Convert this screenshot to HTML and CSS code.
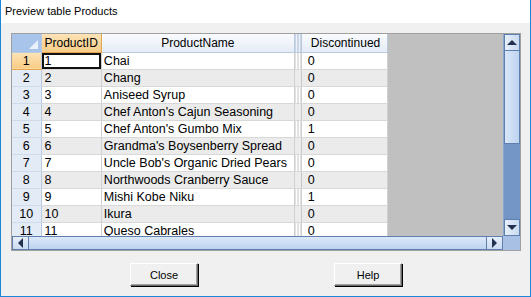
FILE: index.html
```html
<!DOCTYPE html>
<html lang="en">

<head>
    <meta charset="UTF-8">
    <title>Preview table Products</title>
    <link rel="stylesheet" href="styles.css">
</head>

<body>
    <div class="window">
        <div class="titlebar">Preview table Products</div>

        <div class="content">
            <div class="grid">
                <div class="grid-top">
                    <div class="cells">
                        <table>
                            <thead>
                                <tr>
                                    <th class="corner"><span class="tri"></span></th>
                                    <th class="col-id active">ProductID</th>
                                    <th class="col-name">ProductName</th>
                                    <th class="col-sep"></th>
                                    <th class="col-disc">Discontinued</th>
                                </tr>
                            </thead>
                            <tbody id="rows">
                                <!-- rows go here -->
                            </tbody>
                        </table>
                    </div>
                    <div class="vscroll">
                        <div class="arrow up"><span></span></div>
                        <div class="thumb"></div>
                        <div class="track"></div>
                        <div class="arrow down"><span></span></div>
                    </div>
                </div>
                <div class="hscroll">
                    <div class="arrow left"><span></span></div>
                    <div class="hthumb"></div>
                    <div class="arrow right"><span></span></div>
                    <div class="sizebox"></div>
                </div>
            </div>

            <div class="buttons">
                <button>Close</button>
                <button>Help</button>
            </div>
        </div>
    </div>

    <script>
        let products = [
            [1, "Chai", 0],
            [2, "Chang", 0],
            [3, "Aniseed Syrup", 0],
            [4, "Chef Anton's Cajun Seasoning", 0],
            [5, "Chef Anton's Gumbo Mix", 1],
            [6, "Grandma's Boysenberry Spread", 0],
            [7, "Uncle Bob's Organic Dried Pears", 0],
            [8, "Northwoods Cranberry Sauce", 0],
            [9, "Mishi Kobe Niku", 1],
            [10, "Ikura", 0],
            [11, "Queso Cabrales", 0]
        ]

        let tbody = document.getElementById('rows')
        products.forEach((p, i) => {
            let tr = document.createElement('tr')
            if (i % 2 === 1) tr.className = 'alt'
            tr.innerHTML = `
                <td class="num${i === 0 ? ' active' : ''}">${p[0]}</td>
                <td class="col-id${i === 0 ? ' focus' : ''}">${p[0]}</td>
                <td class="col-name">${p[1]}</td>
                <td class="col-sep"></td>
                <td class="col-disc">${p[2]}</td>
            `
            tbody.appendChild(tr)
        })
    </script>
</body>

</html>
```

FILE: styles.css
```css
* {
    margin: 0;
    padding: 0;
    box-sizing: border-box;
}

body {
    background-color: #fff;
    font-family: "Liberation Sans", Arial, sans-serif;
}

.window {
    width: 531px;
    height: 297px;
    border: 1px solid #1c86d9;
    border-top: none;
    background-color: #f0f0f0;
    display: flex;
    flex-direction: column;
}

.titlebar {
    height: 23px;
    background-color: #fff;
    font-family: "Liberation Sans", Arial, sans-serif;
    font-size: 11px;
    line-height: 23px;
    padding-left: 4px;
    color: #000;
}

.content {
    flex: 1;
    padding: 10px 9px 0 10px;
}

.grid {
    width: 510px;
    height: 218px;
    border: 1px solid #a0a0a0;
    background-color: #c0c0c0;
    display: flex;
    flex-direction: column;
    overflow: hidden;
}

.grid-top {
    display: flex;
    height: 202px;
}

.cells {
    flex: 1;
    overflow: hidden;
}

table {
    border-collapse: collapse;
    table-layout: fixed;
    font-size: 12.5px;
    color: #000;
}

th,
td {
    height: 17px;
    padding: 0 3px;
    white-space: nowrap;
    overflow: hidden;
    font-weight: normal;
    text-align: left;
}

th {
    height: 18px;
    font-size: 12px;
    background: linear-gradient(#f9fbfe, #e5ecf6);
    border-right: 1px solid #b9c9de;
    border-bottom: 1px solid #b9c9de;
    text-align: center;
}

td {
    background-color: #fff;
    border-right: 1px solid #d0d0d0;
    border-bottom: 1px solid #d8d8d8;
}

tr.alt td {
    background-color: #ebebeb;
}

.corner {
    width: 29px;
    background: #a9c4ea;
    position: relative;
}

.tri {
    position: absolute;
    right: 3px;
    bottom: 3px;
    width: 0;
    height: 0;
    border-left: 9px solid transparent;
    border-bottom: 9px solid #eaf1fb;
}

.col-id {
    width: 59px;
}

.col-name {
    width: 193px;
}

td.col-name {
    padding-left: 2px;
}

.col-sep {
    width: 7px;
    padding: 0;
    background: repeating-linear-gradient(90deg, #c4c4c4 0 1px, #fff 1px 3px) !important;
}

tr.alt td.col-sep {
    background: #ebebeb !important;
    border-right-color: #c8c8c8;
}

th.col-sep {
    background: repeating-linear-gradient(90deg, #a6b9d4 0 1px, #eef3fa 1px 3px) !important;
}

.col-disc {
    width: 86px;
}

th.col-disc {
    text-align: left;
    padding-left: 9px;
}

td.col-disc {
    padding-left: 6px;
}

th.active {
    background: linear-gradient(#fde3b6, #f8cc86);
    border-right-color: #e5a64e;
    border-bottom-color: #e5a64e;
}

td.num {
    background: #e3ebf6 !important;
    border-right: 1px solid #b9c9de;
    border-bottom: 1px solid #cfdbea;
    text-align: center;
}

td.num.active {
    background: linear-gradient(#fde3b6, #f8cc86) !important;
    border-bottom-color: #e5a64e;
}

td.focus {
    box-shadow: inset 0 0 0 2px #111;
}

/* scrollbars */

.vscroll {
    width: 17px;
    display: flex;
    flex-direction: column;
    background-color: #7396c6;
    border-left: 1px solid #8aa6cf;
}

.arrow {
    width: 16px;
    height: 17px;
    background: linear-gradient(90deg, #e7effb, #c9daf1);
    border: 1px solid #5f7fae;
    display: flex;
    align-items: center;
    justify-content: center;
}

.arrow span {
    width: 0;
    height: 0;
}

.up span {
    border-left: 5px solid transparent;
    border-right: 5px solid transparent;
    border-bottom: 5px solid #20324f;
}

.down span {
    border-left: 5px solid transparent;
    border-right: 5px solid transparent;
    border-top: 5px solid #20324f;
}

.left span {
    border-top: 5px solid transparent;
    border-bottom: 5px solid transparent;
    border-right: 5px solid #20324f;
}

.right span {
    border-top: 5px solid transparent;
    border-bottom: 5px solid transparent;
    border-left: 5px solid #20324f;
}

.thumb {
    height: 93px;
    background: linear-gradient(90deg, #d9e6f8, #bfd4f0);
    border: 1px solid #5f7fae;
    border-top: none;
}

.track {
    flex: 1;
}

.hscroll {
    height: 14px;
    display: flex;
    background-color: #7396c6;
}

.hscroll .arrow {
    width: 17px;
    height: 14px;
    background: linear-gradient(#e7effb, #c9daf1);
}

.hthumb {
    flex: 1;
    background: linear-gradient(#dce8f8, #bcd2ef);
    border-top: 1px solid #5f7fae;
    border-bottom: 1px solid #5f7fae;
}

.sizebox {
    width: 17px;
    background-color: #a7c0e3;
}

/* buttons */

.buttons {
    display: flex;
    padding: 12px 0 0 119px;
    gap: 136px;
}

.buttons button {
    width: 68px;
    height: 23px;
    font-family: "Liberation Sans", Arial, sans-serif;
    font-size: 11px;
    background-color: #f0f0f0;
    border: 1px solid;
    border-color: #fff #696969 #696969 #fff;
    box-shadow: inset -1px -1px 0 #a0a0a0, 1px 1px 0 #000;
    cursor: pointer;
}
```
